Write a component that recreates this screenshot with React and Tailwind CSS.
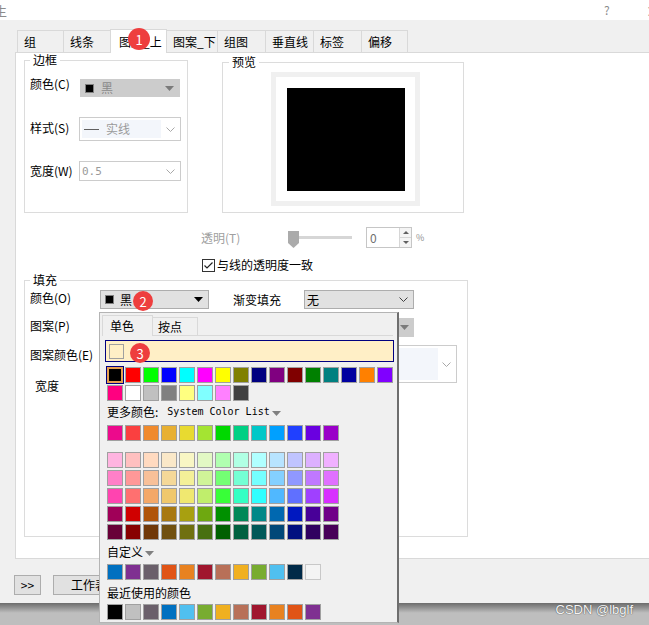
import React from 'react';

const row1 = ['#000000', '#ff0000', '#00ff00', '#0000ff', '#00ffff', '#ff00ff', '#ffff00', '#808000', '#000080', '#800080', '#800000', '#008000', '#008080', '#0000a0', '#ff8000', '#8000ff'];
const row2 = ['#ff0080', '#ffffff', '#c0c0c0', '#808080', '#ffff80', '#80ffff', '#ff80ff', '#404040'];
const more = ['#ec0a8c', '#fa4040', '#f08a2c', '#e8b032', '#e8da30', '#a4e432', '#00d800', '#00d084', '#00c8c8', '#00a0ff', '#2040ff', '#6a00e0', '#9a00c8'];
const shades = [
  ['#ffb4e0', '#ffc0c0', '#ffdac0', '#fae8c8', '#f8f6c4', '#e2f8c4', '#b0ffb0', '#b0ffe4', '#b0ffff', '#b8e4ff', '#c0c4ff', '#dcb0ff', '#f0b0ff'],
  ['#ff80c8', '#ff9898', '#f8c098', '#f4d898', '#f4f098', '#d0f498', '#74ff74', '#74ffd4', '#74ffff', '#84d0ff', '#9098ff', '#c078ff', '#e070ff'],
  ['#ff44b0', '#ff7070', '#f4a868', '#f0c86c', '#f0e870', '#c0ee6c', '#38ff38', '#34ffc4', '#30ffff', '#50b8ff', '#6070ff', '#a040ff', '#d830ff'],
  ['#a00058', '#d00000', '#b05408', '#a87810', '#a8a010', '#6ea810', '#009000', '#008858', '#008888', '#0068b0', '#0018c0', '#480098', '#700088'],
  ['#680038', '#880000', '#703808', '#705010', '#707010', '#487010', '#006000', '#006040', '#005858', '#004878', '#001080', '#300060', '#480058'],
];
const custom = ['#0070c0', '#7f3091', '#6a5f6a', '#e05416', '#e88220', '#a0162e', '#b87058', '#f0b020', '#78ac30', '#50c0f0', '#002a48'];
const recent = ['#000000', '#c0c0c0', '#6a5f6a', '#0070c0', '#50c0f0', '#78ac30', '#f0b020', '#b87058', '#a0162e', '#e88220', '#e05416', '#7f3091'];

const tabs = [
  { name: '组', w: 'w-[47px]' },
  { name: '线条', w: 'w-[48px]' },
  { name: '图案_上', w: 'w-[57px]', active: true },
  { name: '图案_下', w: 'w-[52px]' },
  { name: '组图', w: 'w-[49px]' },
  { name: '垂直线', w: 'w-[49px]' },
  { name: '标签', w: 'w-[49px]' },
  { name: '偏移', w: 'w-[47px]' },
];

function Tri({ color = '#000' }) {
  return (
    <svg width="9" height="5" viewBox="0 0 9 5">
      <polygon points="0,0 9,0 4.5,5" fill={color} />
    </svg>
  );
}

function Chevron({ color = '#a8a8a8' }) {
  return (
    <svg width="9" height="5" viewBox="0 0 9 5">
      <polyline points="0.5,0.5 4.5,4.5 8.5,0.5" fill="none" stroke={color} strokeWidth="1" />
    </svg>
  );
}

function Swatch({ c, border = '#a0a0a0' }) {
  return <div className="w-4 h-4 border" style={{ backgroundColor: c, borderColor: border }} />;
}

function Badge({ n, className }) {
  return (
    <div className={`absolute rounded-full bg-[#ee3e3e] text-white flex items-center justify-center text-[13px] leading-none ${className}`}>
      {n}
    </div>
  );
}

function Group({ title, className, children, legendClass = 'ml-[5px]' }) {
  return (
    <fieldset className={`border border-[#dcdcdc] ${className}`}>
      <legend className={`${legendClass} px-[3px] leading-[14px] text-[12px]`}>{title}</legend>
      {children}
    </fieldset>
  );
}

export default function App() {
  return (
    <div className="w-[649px] h-[625px] overflow-hidden relative bg-[#bfbfbf] font-['Noto_Sans_CJK_SC','Liberation_Sans',sans-serif] text-[12px] text-black">
      {/* title bar */}
      <div className="h-[20px] bg-white flex items-center text-[#8c8c8c] leading-none">
        <span className="-ml-[6px] text-[13px]">生</span>
        <span className="ml-[597px] text-[12px]">?</span>
        <span className="ml-[36px] text-[14px]">×</span>
      </div>

      {/* dialog body */}
      <div className="bg-[#f0f0f0] h-[583px] pt-[10px]">
        <div className="flex items-end h-[22px] ml-[17px]">
          {tabs.map((t, i) => (
            <div
              key={t.name}
              className={`${t.w} ${i ? '-ml-px' : ''} border border-b-0 border-[#d9d9d9] pl-[6px] flex items-center ${
                t.active ? 'h-[24px] -mb-px bg-white relative z-10 pl-[8px]' : 'h-[22px] bg-[#f0f0f0]'
              }`}
            >
              {t.name}
            </div>
          ))}
        </div>

        <div className="ml-[15px] h-[507px] bg-white border border-r-0 border-[#d9d9d9] pl-[8px]">
          <div className="flex">
            <Group title="边框" className="w-[164px] h-[160px]">
              <div className="pl-[5px]">
                <div className="flex items-center mt-[12px] h-[18px]">
                  <span className="w-[50px] leading-[16px] mb-[8px]">颜色(C)</span>
                  <div className="w-[100px] h-[18px] bg-[#cccccc] flex items-center pl-[5px] pr-[6px]">
                    <div className="w-[9px] h-[9px] bg-black border border-[#808080]" />
                    <span className="ml-[7px] text-[#8a8a8a] leading-none">黑</span>
                    <span className="ml-auto flex"><Tri color="#7a7a7a" /></span>
                  </div>
                </div>
                <div className="flex items-center mt-[20px] h-[24px]">
                  <span className="w-[49px] leading-[16px] mb-[3px]">样式(S)</span>
                  <div className="w-[102px] h-[24px] border border-[#cccccc] bg-white flex items-center p-[2px] pr-[5px]">
                    <div className="w-[79px] h-[18px] bg-[#f3f6fb] flex items-center pl-[2px]">
                      <div className="w-[15px] h-px bg-[#606060]" />
                      <span className="ml-[7px] text-[#9a9a9a] leading-none">实线</span>
                    </div>
                    <span className="ml-auto flex"><Chevron /></span>
                  </div>
                </div>
                <div className="flex items-center mt-[20px] h-[20px]">
                  <span className="w-[49px] leading-[16px]">宽度(W)</span>
                  <div className="w-[102px] h-[20px] border border-[#cccccc] bg-white flex items-center pl-[2px] pr-[5px]">
                    <span className="text-[#9a9a9a] font-['DejaVu_Sans_Mono',monospace] text-[11px] leading-none">0.5</span>
                    <span className="ml-auto flex"><Chevron /></span>
                  </div>
                </div>
              </div>
            </Group>

            <Group title="预览" className="ml-[34px] mt-[2px] w-[242px] h-[158px]" legendClass="ml-[6px]">
              <div className="ml-[48px] mt-[3px] w-[149px] h-[134px] border-[5px] border-[#f0f0f0] bg-white pt-[11px] pl-[11px]">
                <div className="w-[118px] h-[103px] bg-black" />
              </div>
            </Group>
          </div>

          {/* transparency */}
          <div className="flex items-center h-[21px] mt-[14px] ml-[177px]">
            <span className="w-[87px] text-[#a0a0a0] leading-none">透明(T)</span>
            <div className="w-[64px] h-[21px] relative flex items-center">
              <div className="w-full h-[3px] bg-[#d6d6d6]" />
              <svg className="absolute left-0 top-[4px]" width="11" height="17" viewBox="0 0 11 17">
                <polygon points="0,0 11,0 11,12 5.5,17 0,12" fill="#ababab" />
              </svg>
            </div>
            <div className="ml-[14px] w-[46px] h-[21px] border border-[#c6c6c6] bg-white flex">
              <span className="pl-[3px] text-[#707070] leading-[19px]">0</span>
              <div className="ml-auto w-[12px] flex flex-col border-l border-[#d6d6d6]">
                <div className="h-1/2 flex items-center justify-center bg-[#f4f4f4] border-b border-[#d6d6d6]">
                  <svg width="6" height="3" viewBox="0 0 6 3"><polygon points="0,3 6,3 3,0" fill="#606060" /></svg>
                </div>
                <div className="h-1/2 flex items-center justify-center bg-[#f4f4f4]">
                  <svg width="6" height="3" viewBox="0 0 6 3"><polygon points="0,0 6,0 3,3" fill="#606060" /></svg>
                </div>
              </div>
            </div>
            <span className="ml-[4px] text-[9px] text-[#909090] leading-none">%</span>
          </div>

          <div className="flex items-center h-[14px] mt-[10px] ml-[178px]">
            <svg width="13" height="13" viewBox="0 0 13 13">
              <rect x="0.5" y="0.5" width="12" height="12" fill="#fff" stroke="#333" />
              <polyline points="2.5,6.5 5,9 10.5,3.5" fill="none" stroke="#222" strokeWidth="1.2" />
            </svg>
            <span className="ml-[2px] leading-none">与线的透明度一致</span>
          </div>

          <Group title="填充" className="mt-[1px] w-[444px] h-[264px]">
            <div className="pl-[5px]">
              <div className="flex items-center mt-[3px] h-[19px]">
                <span className="w-[70px] leading-[16px] mb-[4px]">颜色(O)</span>
                <div className="w-[109px] h-[19px] bg-[#e1e1e1] border border-[#adadad] flex items-center pl-[4px] pr-[5px]">
                  <div className="w-[9px] h-[9px] bg-black border border-[#808080]" />
                  <span className="ml-[6px] leading-none">黑</span>
                  <span className="ml-auto flex"><Tri /></span>
                </div>
                <span className="ml-[24px] w-[71px] leading-none">渐变填充</span>
                <div className="w-[110px] h-[19px] bg-[#e1e1e1] border border-[#adadad] flex items-center pl-[2px] pr-[5px]">
                  <span className="leading-none">无</span>
                  <span className="ml-auto flex"><Chevron color="#404040" /></span>
                </div>
              </div>
              <div className="flex">
                <div className="w-[274px] flex flex-col">
                  <span className="mt-[9px] leading-[16px]">图案(P)</span>
                  <span className="mt-[13px] leading-[16px]">图案颜色(E)</span>
                  <span className="mt-[15px] pl-[5px] leading-[16px]">宽度</span>
                </div>
                <div className="flex flex-col">
                  <div className="mt-[9px] w-[110px] h-[19px] bg-[#cccccc] flex items-center justify-end pr-[5px]">
                    <Tri color="#7a7a7a" />
                  </div>
                  <div className="mt-[8px] w-[153px] h-[38px] border border-[#cccccc] bg-white flex items-center p-[2px] pr-[5px]">
                    <div className="w-[131px] h-[32px] bg-[#f3f6fb]" />
                    <span className="ml-auto flex"><Chevron /></span>
                  </div>
                </div>
              </div>
            </div>
          </Group>
        </div>

        <div className="flex mt-[16px]">
          <div className="ml-[14px] w-[27px] h-[20px] bg-[#e1e1e1] border border-[#adadad] flex items-center justify-center leading-none">&gt;&gt;</div>
          <div className="ml-[12px] w-[80px] h-[20px] bg-[#e1e1e1] border border-[#adadad] flex items-center pl-[17px] leading-none">工作表...</div>
        </div>
      </div>

      {/* bottom shadow strip */}
      <div className="h-[22px] bg-linear-to-b from-[#6c6c6c] to-[#bebebe] to-[45%] flex justify-end pr-[16px]">
        <span className="font-['Liberation_Sans',sans-serif] text-[13px] leading-[13px] text-[#f4f4f4] [text-shadow:0_0_1px_#555,0_0_1px_#555]">CSDN @lbglf</span>
      </div>

      {/* color popup */}
      <div className="absolute left-[99px] top-[312px] w-[300px] h-[311px] bg-[#f0f0f0] border border-[#b4b4b4] border-r-2 border-r-[#6e6e6e] z-20">
        <div className="ml-[2px] mt-[2px] w-[291px] h-[21px] flex items-end border-b border-[#d9d9d9]">
          <div className="w-[51px] h-[21px] -mb-px border border-b-0 border-[#d9d9d9] bg-[#f0f0f0] pl-[7px] flex items-center">单色</div>
          <div className="w-[45px] h-[18px] border border-b-0 border-l-0 border-[#d9d9d9] pl-[5px] flex items-center">按点</div>
        </div>
        <div className="ml-[5px] mt-[4px] w-[289px] h-[22px] border border-[#000080] bg-[#ffefc6] flex items-center pl-[3px]">
          <div className="w-[15px] h-[15px] border border-[#a0a0a0] bg-[#ffefc6]" />
        </div>
        <div className="ml-[7px] mt-[5px] flex gap-[2px]">
          {row1.map((c, i) =>
            i === 0 ? (
              <div key={c} className="w-4 h-4 bg-black border-2 border-[#e8a050] outline outline-1 outline-[#000080]" />
            ) : (
              <Swatch key={c} c={c} />
            )
          )}
        </div>
        <div className="ml-[7px] mt-[2px] flex gap-[2px]">
          {row2.map((c) => <Swatch key={c} c={c} />)}
        </div>
        <div className="ml-[7px] mt-[3px] h-[16px] flex items-center leading-none">
          <span>更多颜色:</span>
          <span className="ml-[9px] font-['DejaVu_Sans_Mono',monospace] text-[10px]">System Color List</span>
          <span className="ml-[2px] mt-[2px] flex"><Tri color="#808080" /></span>
        </div>
        <div className="ml-[7px] mt-[5px] flex gap-[2px]">
          {more.map((c) => <Swatch key={c} c={c} />)}
        </div>
        <div className="ml-[7px] mt-[11px] flex flex-col gap-[2px]">
          {shades.map((r, i) => (
            <div key={i} className="flex gap-[2px]">
              {r.map((c) => <Swatch key={c} c={c} />)}
            </div>
          ))}
        </div>
        <div className="ml-[7px] mt-[4px] h-[16px] flex items-center leading-none">
          <span>自定义</span>
          <span className="ml-[2px] mt-[2px] flex"><Tri color="#808080" /></span>
        </div>
        <div className="ml-[7px] mt-[4px] flex gap-[2px]">
          {custom.map((c) => <Swatch key={c} c={c} />)}
          <Swatch c="#f4f4f4" border="#c8c8c8" />
        </div>
        <div className="ml-[7px] mt-[5px] h-[16px] flex items-center leading-none">最近使用的颜色</div>
        <div className="ml-[7px] mt-[3px] flex gap-[2px]">
          {recent.map((c, i) => <Swatch key={i} c={c} />)}
        </div>
      </div>

      <Badge n="1" className="left-[128px] top-[28px] w-[22px] h-[22px] z-30" />
      <Badge n="2" className="left-[133px] top-[291px] w-[20px] h-[20px] z-30" />
      <Badge n="3" className="left-[130px] top-[343px] w-[20px] h-[20px] z-30" />
    </div>
  );
}
